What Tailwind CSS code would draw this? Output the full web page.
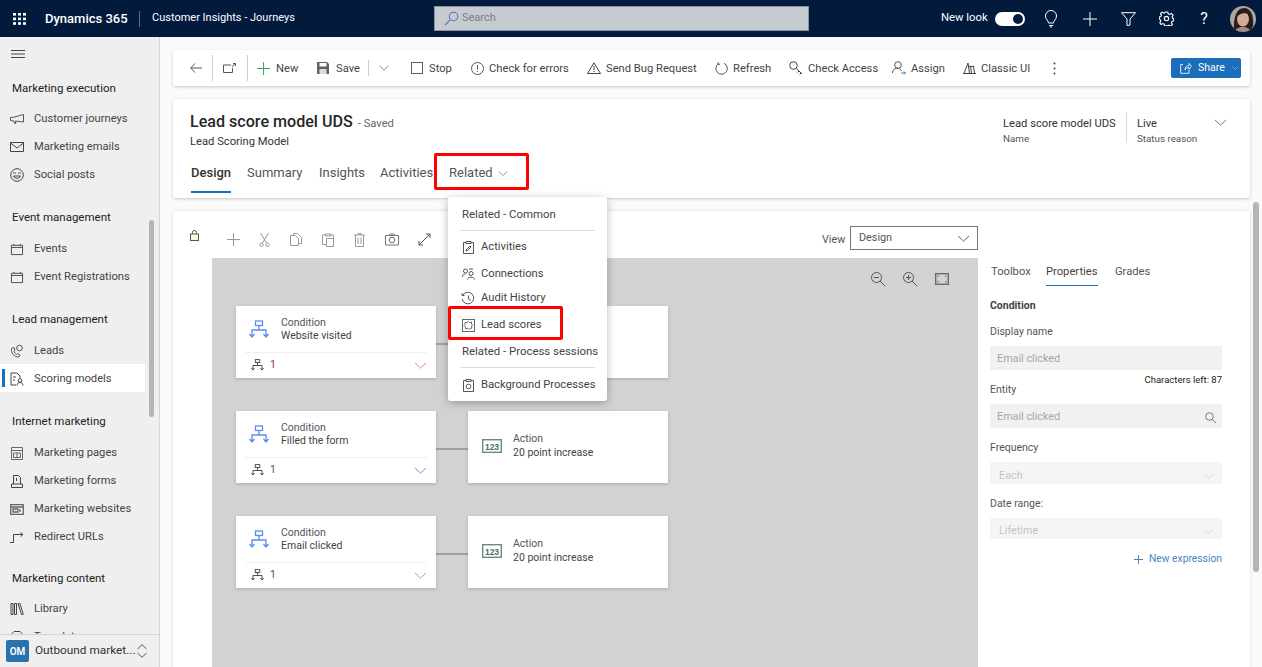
<!DOCTYPE html>
<html lang="en">
<head>
  <meta charset="UTF-8" />
  <title>Customer Insights - Journeys</title>
  <script src="https://cdn.jsdelivr.net/npm/@tailwindcss/browser@4"></script>
</head>
<body class="h-[667px] w-[1262px] overflow-hidden bg-[#fafafa] font-['Roboto',sans-serif] text-[11.2px] text-[#444]">
  <svg class="hidden">
    <symbol id="tree" viewBox="0 0 20 20" fill="none"><rect x="6.500" y="1" width="7" height="4.500" stroke-width="1.300" /><path d="M10 5.500V10M3 16.500V10H17V16.500M0.500 14l2.500 3 2.500-3M14.500 14l2.500 3 2.500-3" stroke-width="1.300" /></symbol>
    <symbol id="chev" viewBox="0 0 14 8" fill="none" preserveAspectRatio="none"><path d="M1 1l6 6 6-6" /></symbol>
    <symbol id="cal" viewBox="0 0 14 14" fill="none"><path d="M1 2.500h12v10H1zM1 4.800h12M3.500 1v1.500M10.500 1v1.500" /></symbol>
    <symbol id="num" viewBox="0 0 20 14"><rect x=".7" y=".7" width="18.600" height="12.600" fill="#fff" stroke="#6f8a78" stroke-width="1.400" /><text x="10" y="10.500" text-anchor="middle" font-size="8.500" font-weight="700" fill="#3f6d6d" font-family="Liberation Sans">123</text></symbol>
  </svg>

  <!-- top bar -->
  <header class="flex h-[37px] items-center bg-[#021a3c] text-white">
    <svg class="ml-[13px] h-3 w-3.5" viewBox="0 0 14 12" fill="#fff"><rect x="0" y="0" width="3" height="2.600"/><rect x="5" y="0" width="3" height="2.600"/><rect x="10" y="0" width="3" height="2.600"/><rect x="0" y="4.600" width="3" height="2.600"/><rect x="5" y="4.600" width="3" height="2.600"/><rect x="10" y="4.600" width="3" height="2.600"/><rect x="0" y="9.200" width="3" height="2.600"/><rect x="5" y="9.200" width="3" height="2.600"/><rect x="10" y="9.200" width="3" height="2.600"/></svg>
    <span class="ml-[18px] w-[94px] whitespace-nowrap text-[13px] font-medium">Dynamics 365</span>
    <span class="h-4 w-px bg-[#5b6b82]"></span>
    <span class="ml-[12px] w-[282px] whitespace-nowrap text-[11px]">Customer Insights - Journeys</span>
    <div class="flex h-[25px] w-[375px] items-center border border-[#8b95a3] bg-[#c6cad1] text-[11px] text-[#7c7f85]">
      <svg class="ml-[9px] h-[15px] w-[15px]" viewBox="0 0 15 15" fill="none" stroke="#5b78b0" stroke-width="1.100"><circle cx="9.500" cy="5.500" r="4.200"/><path d="M6.500 8.500L1 14"/></svg>
      <span class="ml-[3px]">Search</span>
    </div>
    <span class="ml-[132px] w-[47px] whitespace-nowrap text-[11.300px]">New look</span>
    <span class="ml-[7px] flex h-[14px] w-[30px] items-center justify-end rounded-full bg-white pr-[2px]"><span class="h-[10px] w-[10px] rounded-full bg-[#021a3c]"></span></span>
    <svg class="ml-[19px] h-[18px] w-[14px]" viewBox="0 0 14 18" fill="none" stroke="#fff"><path d="M4.500 13c0-2.500-3-3.500-3-7a5.500 5.500 0 0 1 11 0c0 3.500-3 4.500-3 7zM5 15.500h4M6 17h2"/></svg>
    <svg class="ml-[25px] h-[14px] w-[14px]" viewBox="0 0 14 14" stroke="#fff"><path d="M7 0v14M0 7h14"/></svg>
    <svg class="ml-[24px] h-[14px] w-[15px]" viewBox="0 0 15 14" fill="none" stroke="#fff"><path d="M.5.700h14L9 7v6l-3 .5V7z"/></svg>
    <svg class="ml-[23px] h-[15px] w-[15px]" viewBox="0 0 24 24" fill="none" stroke="#fff" stroke-width="1.800"><circle cx="12" cy="12" r="3.500"/><path d="M10 1.500h4l.7 3 2.300 1 2.700-1.600 2.800 2.800L20.900 9.400l1 2.300 1.600.6v3.400l-2.600.7-1 2.300 1.600 2.700-2.800 2.800-2.700-1.600-2.300 1-.7 0h-4l-.7-2.500-2.300-1-2.700 1.600L1.300 18.700l1.600-2.700-1-2.300-1.400-.7v-3.400l2.400-.7 1-2.300L2.300 4.300l2.800-2.400 2.700 1.600 1.500-.6z"/></svg>
    <span class="ml-[25px] w-[10px] text-center text-[16px] leading-none">?</span>
    <svg class="ml-[21px] h-[26px] w-[26px] rounded-full" viewBox="0 0 26 26"><rect width="26" height="26" fill="#aaa7a3"/><path d="M4 26C3 10 7 2 14 2s10 8 9 18l-3 6z" fill="#2b1c17"/><ellipse cx="13" cy="13" rx="6" ry="7.500" fill="#d3ab9c"/><path d="M7 12c1-4 7-6 12-4l-1-4H9z" fill="#2b1c17"/><path d="M4 26c1-3 5-5 9-5s7 2 8 5z" fill="#9f8f88"/></svg>
  </header>

  <div class="flex h-[630px]">
    <!-- sidebar -->
    <aside class="relative w-[160px] shrink-0 overflow-hidden border-r border-[#d4d4d4] bg-[#efefef]">
      <svg class="ml-[11px] mt-[13px] block h-2 w-[14px]" viewBox="0 0 14 8" stroke="#333" stroke-width=".9"><path d="M0 .5h14M0 4h14M0 7.500h14"/></svg>
      <div class="mt-[20px] h-[20px] pl-3 text-[11.500px] leading-[20px] text-[#222]">Marketing execution</div>
      <nav class="mt-[6px]">
        <a class="flex h-[28px] items-center pl-[10px] pt-[2px]"><svg class="h-[10px] w-[14px]" viewBox="0 0 14 10" fill="none" stroke="#555"><path d="M.5 3.500v3l3 .3 1 2.500h1.500l-.8-2.300 8.300 1V.5L4 3.200z"/></svg><span class="ml-[10px]">Customer journeys</span></a>
        <a class="flex h-[28px] items-center pl-[10px] pt-[2px]"><svg class="h-[10px] w-[14px]" viewBox="0 0 14 10" fill="none" stroke="#444"><path d="M.5.500h13v9H.5zM.5 1l6.500 5 6.500-5"/></svg><span class="ml-[10px]">Marketing emails</span></a>
        <a class="flex h-[28px] items-center pl-[10px] pt-[2px]"><svg class="h-[14px] w-[14px]" viewBox="0 0 14 14" fill="none" stroke="#444"><circle cx="7" cy="7" r="6.300"/><path d="M3 5.500c1-1 2-1 3 0M8 5.500c1-1 2-1 3 0M3.500 8h7c-1 3-6 3-7 0z"/></svg><span class="ml-[10px]">Social posts</span></a>
      </nav>
      <div class="mt-[19px] h-[20px] pl-3 text-[11.500px] leading-[20px] text-[#222]">Event management</div>
      <nav class="mt-[7px]">
        <a class="flex h-[28px] items-center pl-[10px] pt-[2px]"><svg class="h-[13px] w-[14px]" stroke="#444"><use href="#cal"/></svg><span class="ml-[10px]">Events</span></a>
        <a class="flex h-[28px] items-center pl-[10px] pt-[2px]"><svg class="h-[13px] w-[14px]" stroke="#444"><use href="#cal"/></svg><span class="ml-[10px]">Event Registrations</span></a>
      </nav>
      <div class="mt-[19px] h-[20px] pl-3 text-[11.500px] leading-[20px] text-[#222]">Lead management</div>
      <nav class="mt-[7px]">
        <a class="flex h-[28px] items-center pl-[10px] pt-[2px]"><svg class="h-[14px] w-[14px]" viewBox="0 0 14 14" fill="none" stroke="#555"><circle cx="9.500" cy="4" r="2.800"/><path d="M1.500 4.500c-1 4 3 9 7.500 8.500l1-2-2.500-1.500-1 1c-1-.5-2.500-2.500-2.500-3.500l1-.8L4 3.500z"/></svg><span class="ml-[10px]">Leads</span></a>
        <a class="relative flex h-[28px] w-[145px] items-center bg-white pl-[10px] pt-[2px]"><span class="absolute left-[2px] top-[5px] h-[18px] w-[3px] bg-[#1b6ebc]"></span><svg class="h-[14px] w-[14px]" viewBox="0 0 14 14" fill="none" stroke="#444"><path d="M6 13H1V1h6l3 3v2"/><circle cx="10" cy="8.500" r="1.800"/><path d="M7 13.500c0-4 6-4 6 0M3 5h3M3 8h2"/></svg><span class="ml-[10px]">Scoring models</span></a>
      </nav>
      <div class="mt-[19px] h-[20px] pl-3 text-[11.500px] leading-[20px] text-[#222]">Internet marketing</div>
      <nav class="mt-[7px]">
        <a class="flex h-[28px] items-center pl-[10px] pt-[2px]"><svg class="h-[13px] w-[14px]" viewBox="0 0 14 13" fill="none" stroke="#666"><path d="M1.500.500h11v12h-11zM1.500 3.500h11M3.500 6h7v4.500h-7zM7 6v4.500"/></svg><span class="ml-[10px]">Marketing pages</span></a>
        <a class="flex h-[28px] items-center pl-[10px] pt-[2px]"><svg class="h-[13px] w-[14px]" viewBox="0 0 14 13" fill="none" stroke="#444"><path d="M3.500 9V.5h5l2 2V9M1.500 12.500V9h11v3.500zM6.500 3v3"/></svg><span class="ml-[10px]">Marketing forms</span></a>
        <a class="flex h-[28px] items-center pl-[10px] pt-[2px]"><svg class="h-[11px] w-[14px]" viewBox="0 0 14 11" fill="none" stroke="#666" stroke-width="1.300"><path d="M.7.700h12.600v9.600H.7zM.7 3h12.600M3 5h5v3H3zM10 5v3"/></svg><span class="ml-[10px]">Marketing websites</span></a>
        <a class="flex h-[28px] items-center pl-[10px] pt-[2px]"><svg class="h-[11px] w-[14px]" viewBox="0 0 14 11" fill="none" stroke="#444"><path d="M0 10.500h3.500V2.500h9M10.500.5l2.500 2-2.500 2"/></svg><span class="ml-[10px]">Redirect URLs</span></a>
      </nav>
      <div class="mt-[18px] h-[20px] pl-3 text-[11.500px] leading-[20px] text-[#222]">Marketing content</div>
      <nav class="mt-[6px]">
        <a class="flex h-[28px] items-center pl-[10px] pt-[2px]"><svg class="h-[12px] w-[14px]" viewBox="0 0 14 12" fill="none" stroke="#444"><path d="M1 .5h2v11H1zM4.500.5h2v11h-2zM8 .5l1.800-.3 3.500 11-1.600.6z"/></svg><span class="ml-[10px]">Library</span></a>
        <a class="flex h-[28px] items-center pl-[10px] pt-[2px]"><svg class="h-[12px] w-[14px]" viewBox="0 0 14 12" fill="none" stroke="#444"><path d="M4 .5h6l2 2v9H2v-9z"/></svg><span class="ml-[10px]">Templates</span></a>
      </nav>
      <span class="absolute left-[149px] top-[183px] h-[197px] w-[5px] rounded-full bg-[#b5b5b5]"></span>
      <footer class="absolute bottom-0 left-0 flex h-[33px] w-[159px] items-center border-t border-[#d4d4d4] bg-[#efefef]">
        <span class="ml-[6px] flex h-[22px] w-[23px] items-center justify-center rounded-[2px] bg-[#2a72ae] text-[10px] font-semibold text-white">OM</span>
        <span class="ml-[6px] w-[100px] whitespace-nowrap text-[11.800px] text-[#333]">Outbound market...</span>
        <svg class="ml-[2px] h-[14px] w-[10px]" viewBox="0 0 10 14" fill="none" stroke="#555"><path d="M.5 5L5 .7 9.500 5M.5 9L5 13.300 9.500 9"/></svg>
      </footer>
    </aside>

    <!-- main -->
    <main class="relative flex-1 overflow-hidden pl-[13px] pt-[13px]">
      <!-- command bar -->
      <div class="flex h-[36px] w-[1077px] items-center whitespace-nowrap rounded-[3px] bg-white shadow-[0_1px_3px_rgba(0,0,0,.2)]">
        <svg class="ml-[17px] h-[10px] w-[12px]" viewBox="0 0 12 10" fill="none" stroke="#555"><path d="M12 5H.8M5 .5L.8 5 5 9.500"/></svg>
        <span class="ml-[10px] h-[26px] w-px bg-[#ccc]"></span>
        <svg class="ml-[10px] h-[10px] w-[13px]" viewBox="0 0 13 10" fill="none" stroke="#555"><path d="M8 2H.5v7.500h9V5M9 4l3-3.500M10 .5h2.500V3"/></svg>
        <span class="ml-[11px] h-[26px] w-px bg-[#ccc]"></span>
        <svg class="ml-[9px] h-[13px] w-[13px]" viewBox="0 0 13 13" stroke="#41a85f"><path d="M6.500 0v13M0 6.500h13"/></svg>
        <span class="ml-[6px] w-[22px] pt-[2px]">New</span>
        <svg class="ml-[19px] h-[12px] w-[12px]" viewBox="0 0 12 12"><path d="M0 0h10l2 2v10H0z" fill="#5f6368"/><rect x="2.500" y="1" width="7" height="3.500" fill="#fff"/><rect x="2.500" y="7" width="7" height="5" fill="#d9dde2"/></svg>
        <span class="ml-[7px] w-[22px] pt-[2px]">Save</span>
        <span class="ml-[10px] h-[16px] w-px bg-[#ccc]"></span>
        <svg class="ml-[10px] h-[6px] w-[10px]" stroke="#666"><use href="#chev"/></svg>
        <svg class="ml-[22px] h-[12px] w-[12px]" viewBox="0 0 12 12" fill="none" stroke="#56607a"><rect x=".5" y=".5" width="11" height="11"/></svg>
        <span class="ml-[6px] w-[22px] pt-[2px]">Stop</span>
        <svg class="ml-[20px] h-[13px] w-[13px]" viewBox="0 0 13 13" fill="none" stroke="#555"><circle cx="6.500" cy="6.500" r="6"/><path d="M6.500 3v4.500M6.500 9v1"/></svg>
        <span class="ml-[5px] w-[79px] pt-[2px]">Check for errors</span>
        <svg class="ml-[19px] h-[12px] w-[14px]" viewBox="0 0 14 12" fill="none" stroke="#444"><path d="M7 .8L13.500 11.500H.5zM7 4v4M7 9v1"/></svg>
        <span class="ml-[5px] w-[90px] pt-[2px]">Send Bug Request</span>
        <svg class="ml-[19px] h-[13px] w-[13px]" viewBox="0 0 13 13" fill="none" stroke="#555"><path d="M9 1.300A5.700 5.700 0 1 1 3.500 1.700M3 .3v2h2"/></svg>
        <span class="ml-[5px] w-[37px] pt-[2px]">Refresh</span>
        <svg class="ml-[19px] h-[14px] w-[14px]" viewBox="0 0 14 14" fill="none" stroke="#444"><circle cx="4.500" cy="4.500" r="3.800"/><path d="M7.500 7.500l5.500 5.500M10 10l-1.500 1.500M12 12l-1.300 1.300"/></svg>
        <span class="ml-[5px] w-[65px] pt-[2px]">Check Access</span>
        <svg class="ml-[19px] h-[14px] w-[14px]" viewBox="0 0 14 14" fill="none" stroke="#555"><circle cx="6" cy="4" r="3.300"/><path d="M.5 12c0-6 8-6 9-2"/><path d="M9 12h4.500M12 10.500l1.500 1.500-1.500 1.500" stroke="#3b82c4"/></svg>
        <span class="ml-[5px] w-[32px] pt-[2px]">Assign</span>
        <svg class="ml-[20px] h-[12px] w-[13px]" viewBox="0 0 13 12" fill="none" stroke="#444"><path d="M0 11.500h13M1 11.500L5 1l1.500 10.500M5.500 5l2-1 1 7.500M8 5l2.500-1 1 7.500"/></svg>
        <span class="ml-[5px] w-[46px] pt-[2px]">Classic UI</span>
        <svg class="ml-[26px] h-[13px] w-[3px]" viewBox="0 0 3 13" fill="#444"><circle cx="1.500" cy="1.500" r="1"/><circle cx="1.500" cy="6.500" r="1"/><circle cx="1.500" cy="11.500" r="1"/></svg>
        <button class="ml-auto mr-[9px] flex h-[20px] w-[70px] items-center rounded-[2px] bg-[#1b6ebc] text-[10.500px] text-white">
          <svg class="ml-[9px] h-[12px] w-[12px]" viewBox="0 0 12 12" fill="none" stroke="#dbe8f5"><path d="M9 7.500v3.800H.7V2.500H3M5 8c0-3 2-4.500 4-4.500V1.300l2.500 3-2.500 3V5.500C7 5.500 6 6.500 5 8z"/></svg>
          <span class="ml-[6px]">Share</span>
          <svg class="ml-[7px] h-[4px] w-[7px]" stroke="#cfe0f1"><use href="#chev"/></svg>
        </button>
      </div>

      <!-- record header -->
      <div class="mt-[13px] h-[99px] w-[1077px] rounded-[3px] bg-white shadow-[0_1px_3px_rgba(0,0,0,.2)]">
        <div class="flex h-[52px] items-start pl-[17px] pt-[12px]">
          <div class="flex-1">
            <div class="flex items-baseline"><span class="text-[16.100px] font-medium leading-[22px] text-[#262626]">Lead score model UDS</span><span class="ml-[5px] text-[11.200px] text-[#666]">- Saved</span></div>
            <div class="mt-[1px] text-[11.200px] leading-[15px] text-[#333]">Lead Scoring Model</div>
          </div>
          <div class="mr-[9px] w-[114px] pt-[5px] leading-[15px]"><div class="whitespace-nowrap text-[11.200px] text-[#333]">Lead score model UDS</div><div class="text-[9.800px] text-[#555]">Name</div></div>
          <div class="mt-[1px] h-[31px] w-px bg-[#d8d8d8]"></div>
          <div class="ml-[10px] w-[73px] pt-[5px] leading-[15px]"><div class="text-[11.200px] text-[#333]">Live</div><div class="whitespace-nowrap text-[9.800px] text-[#555]">Status reason</div></div>
          <svg class="ml-[4px] mr-[23px] mt-[8px] h-[7px] w-[13px]" stroke="#666"><use href="#chev"/></svg>
        </div>
        <div class="flex h-[47px] items-start pl-[18px] pt-[11px] text-[13px] leading-[22px] text-[#555]">
          <span class="h-[31px] w-[40px] whitespace-nowrap border-b-2 border-[#1b6ebc] font-medium text-[#333]">Design</span>
          <span class="ml-[16px] w-[53px] whitespace-nowrap">Summary</span>
          <span class="ml-[19px] w-[43px] whitespace-nowrap">Insights</span>
          <span class="ml-[18px] w-[50px] whitespace-nowrap">Activities</span>
          <span class="ml-[19px] flex w-[59px] items-center">Related<svg class="ml-auto mt-[1px] h-[5px] w-[10px]" stroke="#666"><use href="#chev"/></svg></span>
        </div>
      </div>

      <!-- designer -->
      <div class="mt-[13px] flex h-[480px] w-[1077px] rounded-t-[3px] bg-white shadow-[0_0_3px_rgba(0,0,0,.15)]">
        <div class="w-[39px] pl-[17px] pt-[19px]"><svg class="h-[11px] w-[9px]" viewBox="0 0 9 11" fill="none" stroke="#555"><rect x=".5" y="4" width="8" height="6.500" fill="#fff7d8"/><path d="M2.500 4V2.500a2 2 0 0 1 4 0V4"/></svg></div>
        <div class="w-[766px]">
          <div class="flex h-[47px] items-start pt-[22px]">
            <svg class="ml-[15px] h-[13px] w-[13px]" viewBox="0 0 13 13" stroke="#999"><path d="M6.500 0v13M0 6.500h13"/></svg>
            <svg class="ml-[19px] h-[14px] w-[11px]" viewBox="0 0 11 14" fill="none" stroke="#999"><path d="M1.500 0l6 10M9.500 0l-6 10"/><circle cx="2.500" cy="11.800" r="1.700"/><circle cx="8.500" cy="11.800" r="1.700"/></svg>
            <svg class="ml-[20px] h-[13px] w-[12px]" viewBox="0 0 12 13" fill="none" stroke="#999"><path d="M3.500 2.500V.5h4l4 4v6h-3M.5 2.500h5l3 3v7h-8z"/></svg>
            <svg class="ml-[20px] h-[14px] w-[12px]" viewBox="0 0 12 14" fill="none" stroke="#999"><path d="M3 2H.5v9.500H4M9 2h2.500v3M3.500 1h5v2h-5zM4.500 5.500h7v8h-7z"/></svg>
            <svg class="ml-[20px] h-[14px] w-[11px]" viewBox="0 0 11 14" fill="none" stroke="#999"><path d="M0 2h11M4 2V.5h3V2M1.500 2v11.500h8V2M4 4.500v6.500M7 4.500v6.500"/></svg>
            <svg class="ml-[20px] h-[13px] w-[14px]" viewBox="0 0 14 13" fill="none" stroke="#777"><path d="M.5 2.500h13v9.500H.5z"/><circle cx="7" cy="7" r="2.800" stroke="#58708c"/><path d="M4 2.500l1-1.500h4l1 1.500"/></svg>
            <svg class="ml-[19px] h-[13px] w-[13px]" viewBox="0 0 13 13" fill="none" stroke="#555"><path d="M1 12L12 1M8 1h4v4M1 8v4h4" stroke="#555"/></svg>
          </div>
          <div class="relative h-[433px] bg-[#d2d2d2]">
            <svg class="absolute left-[659px] top-[14px] h-[14px] w-[14px]" viewBox="0 0 14 14" fill="none" stroke="#555"><circle cx="5.500" cy="5.500" r="5"/><path d="M3 5.500h5M9 9l5 5"/></svg>
            <svg class="absolute left-[691px] top-[14px] h-[14px] w-[14px]" viewBox="0 0 14 14" fill="none" stroke="#555"><circle cx="5.500" cy="5.500" r="5"/><path d="M3 5.500h5M5.500 3v5M9 9l5 5"/></svg>
            <svg class="absolute left-[723px] top-[15px] h-[12px] w-[14px]" viewBox="0 0 14 12" fill="none" stroke="#6a6a6a"><rect x=".7" y=".7" width="12.600" height="10.600" stroke-width="1.400"/><path d="M3 4V3h1M10 3h1v1M11 8v1h-1M4 9H3V8" stroke="#4a7a9c"/></svg>

            <!-- connector lines -->
            <span class="absolute left-[224px] top-[85px] h-[2px] w-[32px] bg-[#a0a0a0]"></span>
            <span class="absolute left-[224px] top-[190px] h-[2px] w-[32px] bg-[#a0a0a0]"></span>
            <span class="absolute left-[224px] top-[295px] h-[2px] w-[32px] bg-[#a0a0a0]"></span>

            <!-- condition nodes -->
            <div class="absolute left-[24px] top-[48px] h-[72px] w-[200px] bg-white px-[9px] shadow-[0_1px_3px_rgba(0,0,0,.2)]">
              <div class="flex h-[47px] border-b border-[#f0f0f0] pt-[10px]"><svg class="ml-[4px] mt-[4px] h-[20px] w-[20px]" stroke="#5c8bf5"><use href="#tree"/></svg><div class="ml-[12px] text-[10.500px] leading-[13px] text-[#555]">Condition<div class="text-[#444]">Website visited</div></div></div>
              <div class="flex h-[22px] items-center pt-[2px] text-[10.500px] text-[#8a3b3b]"><svg class="ml-[6px] h-[13px] w-[13px]" stroke="#333"><use href="#tree"/></svg><span class="ml-[6px]">1</span><svg class="ml-auto h-[7px] w-[13px]" stroke="#cf8468"><use href="#chev"/></svg></div>
            </div>
            <div class="absolute left-[24px] top-[153px] h-[72px] w-[200px] bg-white px-[9px] shadow-[0_1px_3px_rgba(0,0,0,.2)]">
              <div class="flex h-[47px] border-b border-[#f0f0f0] pt-[10px]"><svg class="ml-[4px] mt-[4px] h-[20px] w-[20px]" stroke="#5c8bf5"><use href="#tree"/></svg><div class="ml-[12px] text-[10.500px] leading-[13px] text-[#555]">Condition<div class="text-[#444]">Filled the form</div></div></div>
              <div class="flex h-[22px] items-center pt-[2px] text-[10.500px] text-[#555]"><svg class="ml-[6px] h-[13px] w-[13px]" stroke="#333"><use href="#tree"/></svg><span class="ml-[6px]">1</span><svg class="ml-auto h-[7px] w-[13px]" stroke="#5b8fd0"><use href="#chev"/></svg></div>
            </div>
            <div class="absolute left-[24px] top-[258px] h-[72px] w-[200px] bg-white px-[9px] shadow-[0_1px_3px_rgba(0,0,0,.2)]">
              <div class="flex h-[47px] border-b border-[#f0f0f0] pt-[10px]"><svg class="ml-[4px] mt-[4px] h-[20px] w-[20px]" stroke="#5c8bf5"><use href="#tree"/></svg><div class="ml-[12px] text-[10.500px] leading-[13px] text-[#555]">Condition<div class="text-[#444]">Email clicked</div></div></div>
              <div class="flex h-[22px] items-center pt-[2px] text-[10.500px] text-[#555]"><svg class="ml-[6px] h-[13px] w-[13px]" stroke="#333"><use href="#tree"/></svg><span class="ml-[6px]">1</span><svg class="ml-auto h-[7px] w-[13px]" stroke="#cf8468"><use href="#chev"/></svg></div>
            </div>

            <!-- action nodes -->
            <div class="absolute left-[256px] top-[48px] h-[72px] w-[200px] bg-white shadow-[0_1px_3px_rgba(0,0,0,.2)]"></div>
            <div class="absolute left-[256px] top-[153px] flex h-[72px] w-[200px] items-center bg-white pb-[3px] pl-[14px] shadow-[0_1px_3px_rgba(0,0,0,.2)]"><svg class="h-[14px] w-[20px]"><use href="#num"/></svg><div class="ml-[11px] text-[10.500px] leading-[14px] text-[#555]">Action<div class="text-[#444]">20 point increase</div></div></div>
            <div class="absolute left-[256px] top-[258px] flex h-[72px] w-[200px] items-center bg-white pb-[3px] pl-[14px] shadow-[0_1px_3px_rgba(0,0,0,.2)]"><svg class="h-[14px] w-[20px]"><use href="#num"/></svg><div class="ml-[11px] text-[10.500px] leading-[14px] text-[#555]">Action<div class="text-[#444]">20 point increase</div></div></div>
          </div>
        </div>

        <!-- properties panel -->
        <div class="relative ml-[12px] w-[232px]">
          <div class="absolute left-[-140px] top-[15px] flex h-[24px] w-[128px] items-center justify-between border border-[#777] bg-white pl-[8px] pr-[7px] pt-[1px] text-[10.800px] text-[#555]">Design<svg class="h-[7px] w-[13px]" stroke="#555"><use href="#chev"/></svg></div>
          <span class="absolute left-[-168px] top-[21px] text-[10.800px] text-[#555]">View</span>
          <div class="mt-[52px] flex h-[23px] text-[11.200px] text-[#555]">
            <span class="ml-[1px] mt-[1px] w-[39px] whitespace-nowrap">Toolbox</span>
            <span class="ml-[16px] h-[23px] w-[52px] whitespace-nowrap border-b border-[#1b6ebc] pt-[1px] text-[#444]">Properties</span>
            <span class="ml-[17px] mt-[1px]">Grades</span>
          </div>
          <div class="mt-[12px] text-[10.500px] font-bold leading-[16px] text-[#444]">Condition</div>
          <div class="mt-[10px] text-[10.500px] leading-[16px] text-[#555]">Display name</div>
          <div class="mt-[6px] flex h-[24px] items-center bg-[#f2f1f0] pl-[7px] pt-[2px] text-[10.800px] text-[#a6a6a6]">Email clicked</div>
          <div class="text-right text-[9.500px] leading-[20px] text-[#222]">Characters left: 87</div>
          <div class="-mt-[8px] text-[10.500px] leading-[16px] text-[#555]">Entity</div>
          <div class="mt-[6px] flex h-[24px] items-center justify-between bg-[#f2f1f0] pl-[7px] pr-[6px] pt-[2px] text-[10.800px] text-[#a6a6a6]">Email clicked<svg class="h-[11px] w-[11px]" viewBox="0 0 11 11" fill="none" stroke="#777"><circle cx="4.500" cy="4.500" r="3.800"/><path d="M7.500 7.500L11 11"/></svg></div>
          <div class="mt-[12px] text-[10.500px] leading-[16px] text-[#555]">Frequency</div>
          <div class="mt-[6px] flex h-[22px] items-end justify-between overflow-hidden bg-[#f6f5f4] pl-[9px] pr-[9px] text-[10.800px] leading-[16px] text-[#c4c4c4]">Each<svg class="mb-[5px] h-[5px] w-[9px]" stroke="#c8c8c8"><use href="#chev"/></svg></div>
          <div class="mt-[12px] text-[10.500px] leading-[16px] text-[#555]">Date range:</div>
          <div class="mt-[6px] flex h-[21px] items-end justify-between overflow-hidden bg-[#f6f5f4] pl-[9px] pr-[9px] text-[10.800px] leading-[16px] text-[#c4c4c4]">Lifetime<svg class="mb-[5px] h-[5px] w-[9px]" stroke="#c8c8c8"><use href="#chev"/></svg></div>
          <div class="mt-[12px] flex items-center justify-end text-[10.300px] leading-[16px] text-[#4a86c5]"><svg class="mr-[6px] h-[9px] w-[9px]" viewBox="0 0 9 9" stroke="#4a86c5"><path d="M4.500 0v9M0 4.500h9"/></svg>New expression</div>
        </div>
      </div>

      <!-- page scrollbar -->
      <span class="absolute left-[1093px] top-[165px] h-[370px] w-[6px] rounded-full bg-[#b5b5b5]"></span>

      <!-- related menu -->
      <div class="absolute left-[288px] top-[160px] w-[159px] rounded-[3px] bg-white px-[12px] pb-[4px] pt-[9px] shadow-[0_2px_8px_rgba(0,0,0,.28)]">
        <div class="h-[17px] pl-[2px] text-[11.400px] leading-[17px] text-[#444]">Related - Common</div>
        <div class="mt-[7px] h-px bg-[#ddd]"></div>
        <div class="mt-[4px] flex h-[25px] items-center"><svg class="ml-[3px] h-[13px] w-[11px] shrink-0" viewBox="0 0 11 13" fill="none" stroke="#555"><path d="M3 1.500H.5v11h10v-11H8M3 .5h5v2H3zM3 9l4-4 1 1-4 4H3z"/></svg><span class="ml-[7px]">Activities</span></div>
        <div class="flex h-[26px] items-center pt-[2px]"><svg class="ml-[2px] h-[12px] w-[13px] shrink-0" viewBox="0 0 13 12" fill="none" stroke="#555"><circle cx="3.500" cy="3" r="2"/><circle cx="9" cy="5.500" r="2"/><path d="M.5 9c0-2 1-3 3-3M5.500 11.500c0-3 7-3 7 0M7 1h4"/></svg><span class="ml-[6px]">Connections</span></div>
        <div class="flex h-[25px] items-center"><svg class="ml-[1px] h-[13px] w-[14px] shrink-0" viewBox="0 0 14 13" fill="none" stroke="#555"><path d="M2 3a5.800 5.800 0 1 1-.8 4M1 1v2.500h2.500M7.500 3.500v3.500l2.500 1.500"/></svg><span class="ml-[6px]">Audit History</span></div>
        <div class="flex h-[26px] items-center pt-[2px]"><svg class="ml-[2px] h-[13px] w-[13px] shrink-0" viewBox="0 0 13 13" fill="none" stroke="#666"><rect x=".5" y=".5" width="12" height="12"/><path d="M5 3.500l1.500-1 1 1 2-.5v2l1 1-1 1.500.5 1.500-2 .5-1 1-1.500-1-2 .3V8L2 6.500l1-1V3.500z"/></svg><span class="ml-[6px]">Lead scores</span></div>
        <div class="mt-[1px] h-[29px] whitespace-nowrap pl-[2px] pt-[1px] text-[11.400px] leading-[25px] text-[#444]">Related - Process sessions</div>
        <div class="h-px bg-[#ddd]"></div>
        <div class="mt-[3px] flex h-[26px] items-center pt-[2px]"><svg class="ml-[3px] h-[13px] w-[11px] shrink-0" viewBox="0 0 11 13" fill="none" stroke="#555"><path d="M3 1.500H.5v11h10v-11H8M3 .5h5v2H3z"/><circle cx="5.500" cy="7.500" r="2.300"/></svg><span class="ml-[7px] whitespace-nowrap">Background Processes</span></div>
      </div>

      <!-- callouts -->
      <span class="absolute left-[274px] top-[116px] h-[37px] w-[95px] rounded-[2px] border-[3px] border-[#ff0000]"></span>
      <span class="absolute left-[288px] top-[269px] h-[34px] w-[115px] rounded-[2px] border-[3px] border-[#ff0000]"></span>
    </main>
  </div>
</body>
</html>
